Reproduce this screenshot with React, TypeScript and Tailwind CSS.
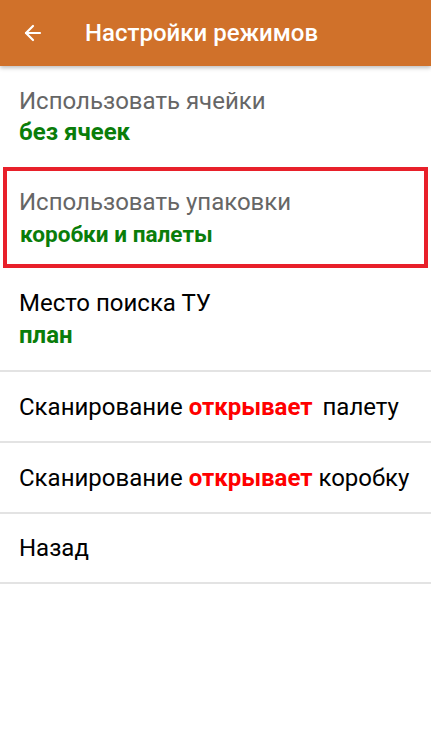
import { ArrowLeft } from "lucide-react";

const font = { fontFamily: "Roboto, 'Noto Sans', sans-serif" };

function Divider() {
  return <div className="h-[2px] bg-[#e3e3e3]" />;
}

export default function App() {
  return (
    <div className="w-[431px] h-[739px] bg-white overflow-hidden" style={font}>
      <header className="h-[66px] bg-[#d0712a] flex items-center shadow-[0_2px_4px_rgba(0,0,0,0.25)] relative z-10">
        <ArrowLeft className="ml-[21px] w-[24px] h-[24px] text-white" strokeWidth={2.2} />
        <h1 className="ml-[40px] text-white text-[24px] font-medium">Настройки режимов</h1>
      </header>

      <div className="flex flex-col">
        <div className="h-[101px] px-[19px] pt-[20px]">
          <div className="text-[24px] leading-[30px] text-[#666666]">Использовать ячейки</div>
          <div className="text-[24px] leading-[32px] font-bold text-[#0a7d0a]">без ячеек</div>
        </div>
        <div className="mx-[3px] h-[101px] border-[4px] border-[#e8202a] px-[12px] pt-[16px]">
          <div className="text-[24px] leading-[30px] text-[#666666]">Использовать упаковки</div>
          <div className="text-[22.6px] leading-[36px] font-bold text-[#0a7d0a] pl-[1px]">коробки и палеты</div>
        </div>
        <div className="h-[2px]" />
        <div className="h-[100px] px-[19px] pt-[18px]">
          <div className="text-[24px] leading-[30px] text-black">Место поиска ТУ</div>
          <div className="text-[24px] leading-[34px] font-bold text-[#0a7d0a]">план</div>
        </div>
        <Divider />
        <div className="h-[69px] px-[19px] flex items-center text-[24px] text-black">
          <span>Сканирование&nbsp;</span>
          <span className="font-bold text-[#ff0000]">открывает</span>
          <span className="ml-[10px]">палету</span>
        </div>
        <Divider />
        <div className="h-[69px] px-[19px] flex items-center text-[24px] text-black">
          <span>Сканирование&nbsp;</span>
          <span className="font-bold text-[#ff0000]">открывает</span>
          <span>&nbsp;коробку</span>
        </div>
        <Divider />
        <div className="h-[68px] px-[19px] flex items-center text-[24px] text-black">Назад</div>
        <Divider />
      </div>
    </div>
  );
}
